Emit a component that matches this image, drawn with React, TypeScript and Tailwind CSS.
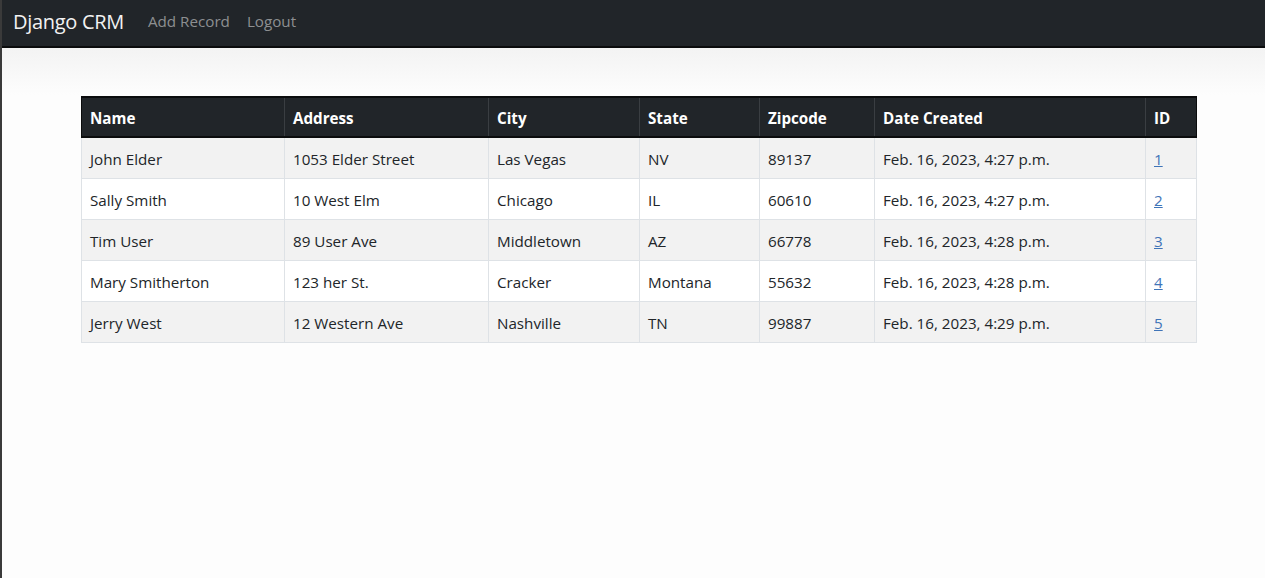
const records = [
  { id: 1, name: 'John Elder', address: '1053 Elder Street', city: 'Las Vegas', state: 'NV', zipcode: '89137', created: 'Feb. 16, 2023, 4:27 p.m.' },
  { id: 2, name: 'Sally Smith', address: '10 West Elm', city: 'Chicago', state: 'IL', zipcode: '60610', created: 'Feb. 16, 2023, 4:27 p.m.' },
  { id: 3, name: 'Tim User', address: '89 User Ave', city: 'Middletown', state: 'AZ', zipcode: '66778', created: 'Feb. 16, 2023, 4:28 p.m.' },
  { id: 4, name: 'Mary Smitherton', address: '123 her St.', city: 'Cracker', state: 'Montana', zipcode: '55632', created: 'Feb. 16, 2023, 4:28 p.m.' },
  { id: 5, name: 'Jerry West', address: '12 Western Ave', city: 'Nashville', state: 'TN', zipcode: '99887', created: 'Feb. 16, 2023, 4:29 p.m.' },
];

const columns = ['Name', 'Address', 'City', 'State', 'Zipcode', 'Date Created', 'ID'];
const widths = ['w-[203px]', 'w-[204px]', 'w-[151px]', 'w-[120px]', 'w-[115px]', 'w-[271px]', 'w-[51px]'];

export default function App() {
  return (
    <div className="min-h-[578px] bg-[#fdfdfd] border-l-2 border-[#3a3a3a] font-['Segoe_UI','Open_Sans',sans-serif] text-[#212529]">
      <nav className="h-12 bg-[#212529] border-b-2 border-[#0b0c0d] flex items-center pl-[11px] gap-6">
        <span className="text-[20px] text-[#f2f2f2] tracking-[-0.3px] pb-[2px]">Django CRM</span>
        <div className="flex items-center gap-[17px] text-[15.2px] text-[#8d8f91] pb-[3px]">
          <span>Add Record</span>
          <span>Logout</span>
        </div>
      </nav>
      <div className="h-[47px] bg-gradient-to-b from-[#f3f3f3] to-[#fdfdfd]" />
      <div className="pl-[79px] pt-[1px]">
        <table className="table-fixed border-collapse w-[1115px] text-[15.2px]">
          <colgroup>
            {widths.map((w, i) => (
              <col key={i} className={w} />
            ))}
          </colgroup>
          <thead>
            <tr className="bg-[#212529] text-white">
              {columns.map((c) => (
                <th
                  key={c}
                  className="h-[40px] px-2 pt-[2px] text-left font-bold border-y-2 border-x border-[#0b0c0d] border-x-[#3a3e42] first:border-l-[#0b0c0d] last:border-r-[#0b0c0d]"
                >
                  {c}
                </th>
              ))}
            </tr>
          </thead>
          <tbody>
            {records.map((r, i) => (
              <tr key={r.id} className={i % 2 === 0 ? 'bg-[#f2f2f2]' : 'bg-white'}>
                {[r.name, r.address, r.city, r.state, r.zipcode, r.created].map((v, j) => (
                  <td key={j} className="h-[41px] px-2 pt-[3px] border border-[#dee2e6]">
                    {v}
                  </td>
                ))}
                <td className="h-[41px] px-2 pt-[3px] border border-[#dee2e6]">
                  <a href="#" className="text-[#3f74b8] underline">
                    {r.id}
                  </a>
                </td>
              </tr>
            ))}
          </tbody>
        </table>
      </div>
    </div>
  );
}
